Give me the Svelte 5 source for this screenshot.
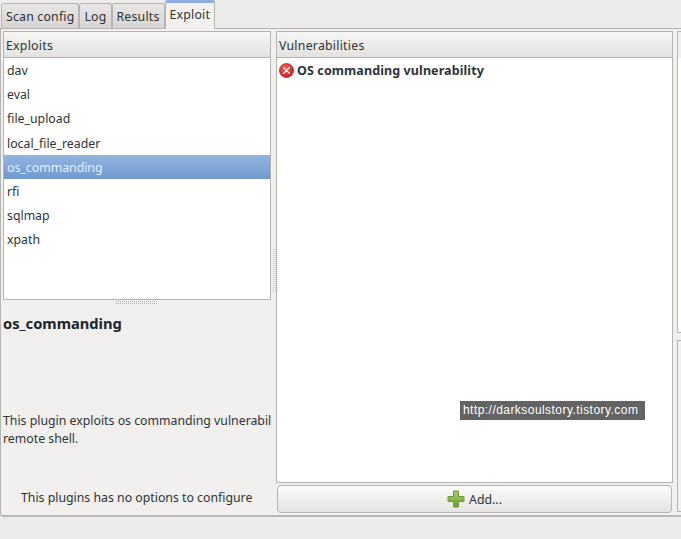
<script>
  const exploits = ['dav', 'eval', 'file_upload', 'local_file_reader', 'os_commanding', 'rfi', 'sqlmap', 'xpath'];
  const selected = 'os_commanding';
  const tabs = ['Scan config', 'Log', 'Results', 'Exploit'];
</script>

<div class="window">
  <div class="tabs">
    {#each tabs as t}
      <div class="tab" class:active={t === 'Exploit'}>{t}</div>
    {/each}
  </div>
  <div class="notebook">
    <div class="left">
      <div class="tree left-tree">
        <div class="head">Exploits</div>
        <div class="rows">
          {#each exploits as e}
            <div class="row" class:sel={e === selected}>{e}</div>
          {/each}
        </div>
      </div>
      <div class="grip-h"></div>
      <h1 class="title">os_commanding</h1>
      <p class="desc">This plugin exploits os commanding vulnerability and returns a<br />remote shell.</p>
      <div class="noopts">This plugins has no options to configure</div>
    </div>
    <div class="grip-v"></div>
    <div class="right">
      <div class="tree right-tree">
        <div class="head">Vulnerabilities</div>
        <div class="vuln">
          <svg width="15" height="15" viewBox="0 0 15 15">
            <defs>
              <radialGradient id="er" cx="0.4" cy="0.3" r="0.8">
                <stop offset="0" stop-color="#f0605a" />
                <stop offset="1" stop-color="#c41a1a" />
              </radialGradient>
            </defs>
            <circle cx="7.5" cy="7.5" r="7" fill="url(#er)" stroke="#a31414" stroke-width="0.7" />
            <path d="M4.6 4.6 10.4 10.4M10.4 4.6 4.6 10.4" stroke="#fff" stroke-width="1.3" stroke-linecap="round" />
          </svg>
          <span>OS commanding vulnerability</span>
        </div>
      </div>
      <button class="add">
        <svg width="18" height="18" viewBox="0 0 18 18">
          <defs>
            <linearGradient id="pl" x1="0" y1="0" x2="0" y2="1">
              <stop offset="0" stop-color="#a9cf6a" />
              <stop offset="1" stop-color="#6b9c2e" />
            </linearGradient>
          </defs>
          <path d="M6.5 1h5v5.5H17v5h-5.500V17h-5v-5.500H1v-5h5.500z" fill="url(#pl)" stroke="#6f9a3a" stroke-width="1" />
        </svg>
        <span>Add...</span>
      </button>
    </div>
    <div class="sliver">
      <div class="sl one"></div>
      <div class="sl two"></div>
    </div>
  </div>
  <div class="watermark">http://darksoulstory.tistory.com</div>
</div>

<style>
  :global(body) { margin: 0; background: #edecea; }
  .window {
    width: 681px; height: 539px; overflow: hidden; position: relative;
    background: #edecea; color: #2e3436;
    font-family: "Noto Sans", sans-serif; font-size: 12.3px;
  }
  .tabs { display: flex; height: 28px; align-items: flex-end; padding-left: 1px; }
  .tab {
    height: 25px; line-height: 26px; padding: 0 4px; box-sizing: border-box;
    letter-spacing: 0.2px;
    background: linear-gradient(#e8e7e5, #d6d5d3);
    border: 1px solid #b5b4b1; border-bottom: 0; border-radius: 3px 3px 0 0;
  }
  .tab.active {
    height: 29px; line-height: 24px; margin-bottom: -1px; position: relative; padding: 0 4px;
    background: #f2f1f0; border-top: 3px solid #8fb0dc; border-radius: 2px 2px 0 0;
  }
  .notebook {
    height: 489px; box-sizing: border-box; display: flex; overflow: hidden;
    background: #f1f0ef;
    border-top: 1px solid #b5b4b1; border-bottom: 2px solid #b9b8b5;
    border-left: 1px solid #b5b4b1; border-radius: 0 0 0 4px;
  }
  .left { width: 271px; flex: none; padding: 2px 0 0 2px; box-sizing: border-box; display: flex; flex-direction: column; overflow: hidden; }
  .tree { box-sizing: border-box; border: 1px solid #b5b4b1; background: #fff; }
  .left-tree { width: 268px; height: 269px; flex: none; }
  .head {
    height: 26px; line-height: 28px; padding-left: 2px; box-sizing: border-box; letter-spacing: 0.25px;
    background: linear-gradient(#f6f6f5, #e3e2e0); border-bottom: 1px solid #b5b4b1;
  }
  .row { height: 24.2px; line-height: 26px; padding-left: 3px; box-sizing: border-box; }
  .row.sel {
    color: #e8eef7; background: linear-gradient(#93b5e1, #7099cd);
  }
  .grip-h {
    width: 42px; height: 4px; margin: 1px 0 0 112px; flex: none;
    background-image: conic-gradient(#b5b4b1 25%, transparent 0);
    background-size: 2px 2px;
  }
  .title { margin: 8px 0 0; font-size: 14.7px; line-height: 20px; font-weight: 700; color: #20242a; }
  .desc { margin: 79px 0 0; line-height: 18px; white-space: nowrap; }
  .noopts { margin-top: 41px; margin-left: 18px; line-height: 18px; white-space: nowrap; }
  .grip-v {
    width: 4px; height: 44px; margin: 220px 0 0 0; flex: none;
    background-image: conic-gradient(#c4c3c0 25%, transparent 0);
    background-size: 2px 2px;
  }
  .right { width: 397px; flex: none; padding-top: 2px; box-sizing: border-box; }
  .right-tree { height: 452px; }
  .vuln { display: flex; align-items: center; gap: 3px; padding: 4px 0 0 2px; font-weight: 700; font-size: 12.5px; letter-spacing: 0.1px; }
  .add {
    display: flex; align-items: center; justify-content: center; gap: 4px;
    width: 395px; height: 28px; margin: 2px 0 0 1px; padding: 0;
    font: inherit; color: #2e3436;
    background: linear-gradient(#fbfbfb, #e4e3e1);
    border: 1px solid #b5b4b1; border-radius: 4px;
  }
  .sliver { flex: none; width: 20px; margin-left: 4px; display: flex; flex-direction: column; padding-top: 2px; }
  .sl { border: 1px solid #b5b4b1; background: #f1f0ef; box-sizing: border-box; flex: none; }
  .one { height: 302px; background: linear-gradient(#f0efee 0, #f0efee 26px, #fff 26px); }
  .two { height: 172px; margin-top: 7px; }
  .watermark {
    position: absolute; left: 460px; top: 401px; width: 185px; height: 19px;
    line-height: 18px; padding-left: 3px; box-sizing: border-box;
    background: #636363; color: #fff; font-family: "Liberation Sans", sans-serif; font-size: 12px; white-space: nowrap;
    letter-spacing: 0.45px;
  }
</style>
